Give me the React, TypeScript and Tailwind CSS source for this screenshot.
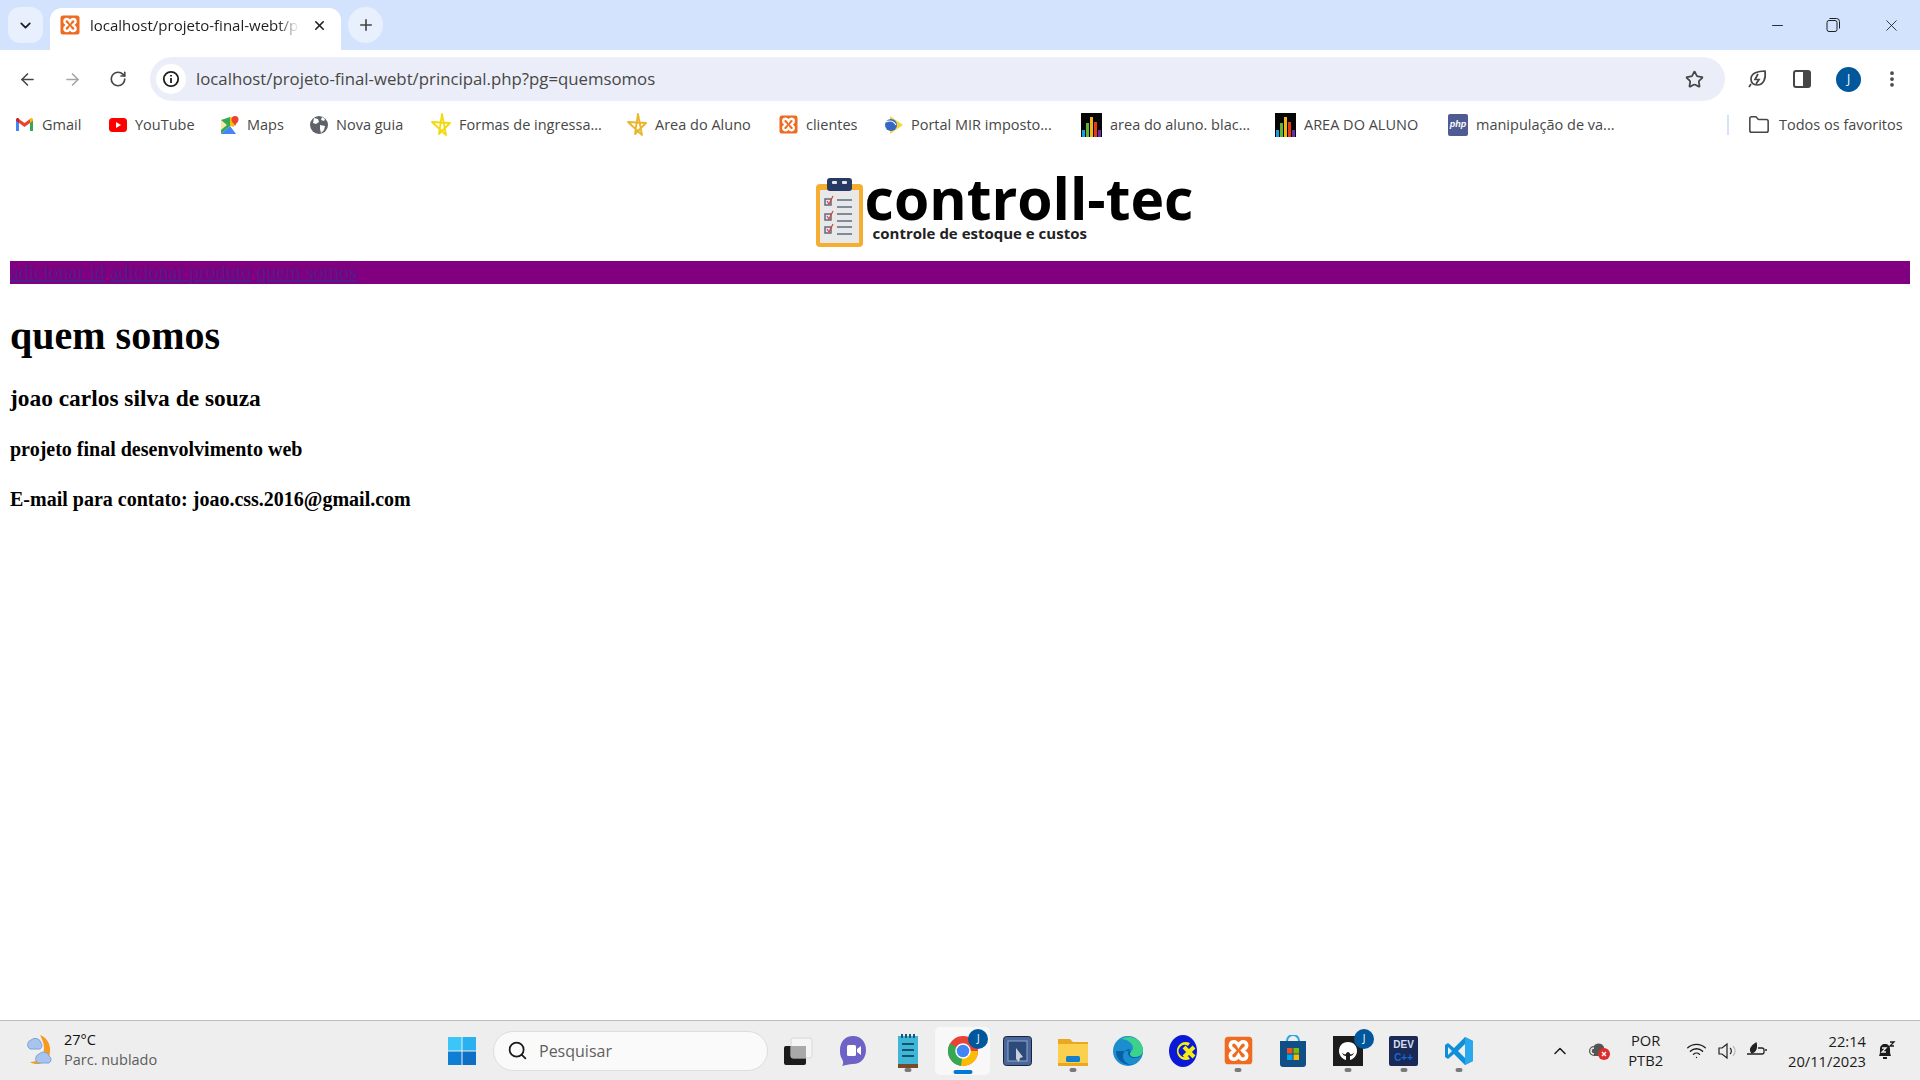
import React from 'react';
import { ArrowLeft, ArrowRight, RotateCw, Star, Plus, X, ChevronDown, ChevronUp, Minus, Folder, Search, EllipsisVertical, Wifi } from 'lucide-react';

const UI_FONT = 'font-["Open_Sans",sans-serif]';

const XamppIcon: React.FC<{ size: number }> = ({ size }) => (
  <svg width={size} height={size} viewBox="0 0 20 20">
    <rect x="0.5" y="0.5" width="19" height="19" rx="2.5" fill="#ee6b1f" />
    <path d="M7 4c-3 0-3.5 3.5-1 5l1 1-1 1c-2.500 1.500-2 5 1 5 1.500 0 2.300-1.300 3-2.500.7 1.200 1.500 2.500 3 2.500 3 0 3.500-3.500 1-5l-1-1 1-1c2.500-1.500 2-5-1-5-1.500 0-2.300 1.300-3 2.500C9.300 5.300 8.500 4 7 4z" fill="none" stroke="#fff" strokeWidth="2.500" />
  </svg>
);

const BarsIcon = () => (
  <svg width="21" height="24" viewBox="0 0 21 24">
    <rect width="21" height="24" fill="#050505" />
    <rect x="1" y="17" width="3" height="7" fill="#1b9be0" />
    <rect x="5" y="10" width="3" height="14" fill="#63b32e" />
    <rect x="9" y="4" width="3" height="20" fill="#f0b41c" />
    <rect x="13" y="9" width="3" height="15" fill="#e53a1a" />
    <rect x="17" y="17" width="3" height="7" fill="#6a2da8" />
  </svg>
);

const StarOutline: React.FC<{ color: string }> = ({ color }) => (
  <svg width="20" height="24" viewBox="0 0 20 24">
    <path d="M11 1 8 21l11-11L1 9l14 13z" fill="none" stroke={color} strokeWidth="1.800" strokeLinejoin="round" />
  </svg>
);

const bookmarks: { label: string; width: string; icon: React.ReactNode }[] = [
  {
    label: 'Gmail',
    width: 'w-[94px]',
    icon: (
      <svg width="19" height="15" viewBox="0 0 19 15">
        <path d="M1 14V3l3 2v9z" fill="#4285f4" />
        <path d="M15 14V5l3-2v11z" fill="#34a853" />
        <path d="M4 6V2L9.500 6 15 2v4L9.500 10z" fill="#ea4335" />
        <path d="M1 3.500V2.500C1 1 3 .4 4 1.500V6z" fill="#c5221f" />
        <path d="M18 3.500V2.500C18 1 16 .4 15 1.500V6z" fill="#fbbc04" />
      </svg>
    ),
  },
  {
    label: 'YouTube',
    width: 'w-[111px]',
    icon: (
      <svg width="18" height="14" viewBox="0 0 18 14">
        <rect width="18" height="14" rx="3.500" fill="#f00" />
        <path d="M7 4l5 3-5 3z" fill="#fff" />
      </svg>
    ),
  },
  {
    label: 'Maps',
    width: 'w-[90px]',
    icon: (
      <svg width="19" height="20" viewBox="0 0 19 20">
        <path d="M1 5l9-3v9L1 19z" fill="#34a853" />
        <path d="M1 19l9-8 6 8z" fill="#4285f4" />
        <path d="M10 2l4 1v9l-4-1z" fill="#fbbc04" />
        <path d="M1 5l6 5-6 5z" fill="#fce8a6" />
        <circle cx="15" cy="4.500" r="3.500" fill="#ea4335" />
        <path d="M12.500 6.500 15 11l2.500-4.500z" fill="#ea4335" />
      </svg>
    ),
  },
  {
    label: 'Nova guia',
    width: 'w-[121px]',
    icon: (
      <svg width="18" height="18" viewBox="0 0 18 18">
        <circle cx="9" cy="9" r="9" fill="#5f6368" />
        <path d="M4 2l4 1 1 3-3 2-3-1zM10 9l5 1-1 4-3 3-1-4zM12 1l3 2-1 2-3-1z" fill="#fff" />
      </svg>
    ),
  },
  { label: 'Formas de ingressa...', width: 'w-[196px]', icon: <StarOutline color="#f5d90f" /> },
  { label: 'Area do Aluno', width: 'w-[152px]', icon: <StarOutline color="#e9b52a" /> },
  { label: 'clientes', width: 'w-[105px]', icon: <XamppIcon size={19} /> },
  {
    label: 'Portal MIR imposto...',
    width: 'w-[197px]',
    icon: (
      <svg width="19" height="20" viewBox="0 0 19 20">
        <path d="M6 1l13 9L6 19z" fill="#f4d63a" />
        <circle cx="7" cy="10" r="6" fill="#3568c4" />
        <path d="M2 7c4-2 8-1 10 3" fill="none" stroke="#fff" strokeWidth="1.200" />
      </svg>
    ),
  },
  { label: 'area do aluno. blac...', width: 'w-[194px]', icon: <BarsIcon /> },
  { label: 'AREA DO ALUNO', width: 'w-[173px]', icon: <BarsIcon /> },
  {
    label: 'manipulação de va...',
    width: 'w-[200px]',
    icon: (
      <span className="flex h-[22px] w-[20px] items-center justify-center rounded-[2px] bg-[#4f5b93] font-['Liberation_Sans',sans-serif] text-[9px] font-bold italic text-white">
        php
      </span>
    ),
  },
];

const TabStrip = () => (
  <div className="flex h-[50px] items-end bg-[#d3e3fd] pl-2">
    <div className="mb-[7px] flex h-[36px] w-[35px] items-center justify-center rounded-[12px] bg-[#e8effd] text-[#1f1f1f]">
      <ChevronDown size={17} strokeWidth={2.500} />
    </div>
    <div className="ml-[7px] flex h-[42px] w-[291px] items-center rounded-t-[12px] bg-white pb-[8px] pl-[10px]">
      <XamppIcon size={20} />
      <span className={`ml-[10px] w-[209px] overflow-hidden whitespace-nowrap text-[15px] text-[#1f1f1f] [mask-image:linear-gradient(to_right,#000_90%,transparent)] ${UI_FONT}`}>
        localhost/projeto-final-webt/principal.php
      </span>
      <X size={15} strokeWidth={2.500} className="ml-[13px] text-[#1f1f1f]" />
    </div>
    <div className="mb-[7px] ml-[7px] flex h-[36px] w-[35px] items-center justify-center rounded-full bg-[#e8effd] text-[#444746]">
      <Plus size={18} strokeWidth={2.200} />
    </div>
    <div className="mb-[9px] ml-auto flex h-[32px] items-center text-[#1f1f1f]">
      <Minus size={17} strokeWidth={1.300} className="mr-[40px]" />
      <svg width="14" height="14" viewBox="0 0 14 14" className="mr-[42px]" fill="none" stroke="currentColor">
        <rect x="1" y="2.500" width="10" height="11" rx="2" />
        <path d="M3.500 .5h7a3 3 0 0 1 3 3v7" />
      </svg>
      <X size={19} strokeWidth={1.100} className="mr-[19px]" />
    </div>
  </div>
);

const Toolbar = () => (
  <div className="flex h-[51px] items-start rounded-t-[10px] bg-white pt-[7px]">
    <div className="flex h-[44px] w-[150px] items-center pl-[18px]">
      <ArrowLeft size={19} strokeWidth={2} className="text-[#444746]" />
      <ArrowRight size={19} strokeWidth={2} className="ml-[26px] text-[#a3a5a8]" />
      <RotateCw size={18} strokeWidth={2.200} className="ml-[27px] text-[#444746]" />
    </div>
    <div className="flex h-[44px] w-[1575px] items-center rounded-full bg-[#ebeef8] pl-[6px] pr-[21px]">
      <div className="flex h-[30px] w-[30px] items-center justify-center rounded-full bg-white">
        <svg width="18" height="18" viewBox="0 0 18 18" fill="none" stroke="#1f1f1f" strokeWidth="1.800">
          <circle cx="9" cy="9" r="7.200" />
          <path d="M9 8v5M9 5v1.500" />
        </svg>
      </div>
      <span className={`ml-[10px] flex-1 whitespace-nowrap text-[16.800px] text-[#474747] ${UI_FONT}`}>
        localhost/projeto-final-webt/principal.php?pg=quemsomos
      </span>
      <Star size={19} strokeWidth={2.200} className="text-[#444746]" />
    </div>
    <div className="flex h-[44px] flex-1 items-center pl-[22px] text-[#444746]">
      <svg width="20" height="20" viewBox="0 0 20 20" fill="none" stroke="currentColor" strokeWidth="1.700">
        <path d="M2 18l2-3M18 2c1 7-1 14-8 14-4 0-6-2-6-6 0-6 7-8 14-8z" />
        <path d="M11 5 8 10.500h4L9 15" />
      </svg>
      <svg width="18" height="18" viewBox="0 0 18 18" className="ml-[26px]">
        <rect x="1" y="1" width="16" height="16" rx="2" fill="none" stroke="currentColor" strokeWidth="2" />
        <rect x="10" y="1" width="7" height="16" fill="currentColor" />
      </svg>
      <div className={`ml-[25px] flex h-[25px] w-[25px] items-center justify-center rounded-full bg-[#01579b] text-[12px] text-white ${UI_FONT}`}>J</div>
      <EllipsisVertical size={20} strokeWidth={2.500} className="ml-[21px]" />
    </div>
  </div>
);

const BookmarksBar = () => (
  <div className={`flex h-[45px] items-center pl-[15px] pt-[2px] text-[14.500px] text-[#474747] ${UI_FONT}`}>
    {bookmarks.map((b) => (
      <div key={b.label} className={`flex shrink-0 items-center gap-[8px] whitespace-nowrap ${b.width}`}>
        {b.icon}
        <span>{b.label}</span>
      </div>
    ))}
    <div className="ml-[79px] h-[20px] w-[2px] bg-[#d3e3fd]" />
    <Folder size={22} strokeWidth={1.700} className="ml-[19px] text-[#444746]" />
    <span className="ml-[9px] whitespace-nowrap">Todos os favoritos</span>
  </div>
);

const Logo = () => (
  <div className="flex h-[115px] items-start justify-center pl-[88px] pt-[29px]">
    <div className="mt-[2px] flex">
      <svg width="50" height="70" viewBox="0 0 50 70">
        <rect x="1" y="7" width="47" height="63" rx="4" fill="#f5ae31" />
        <rect x="5" y="13" width="39" height="53" fill="#e8e8e8" />
        <rect x="12" y="1" width="25" height="13" rx="3" fill="#263a63" />
        <rect x="17" y="4" width="5" height="3" rx="1" fill="#e8e8e8" />
        <rect x="27" y="4" width="5" height="3" rx="1" fill="#e8e8e8" />
        <g fill="none" stroke="#5d6b85" strokeWidth="1.500">
          <rect x="10" y="22" width="6" height="6" />
          <rect x="10" y="37" width="6" height="6" />
          <rect x="10" y="50" width="6" height="6" />
          <path d="M22 23h15M22 30h15M22 37h15M22 44h15M22 50h15M22 57h15" />
        </g>
        <g fill="none" stroke="#e0413a" strokeWidth="1.200">
          <path d="M12 24l2 3 4-8M12 39l2 3 4-8M12 52l2 3 4-8" />
        </g>
      </svg>
    </div>
    <div className="flex flex-col font-['Open_Sans',sans-serif] font-bold text-black">
      <span className="mt-[-2px] h-[50px] whitespace-nowrap text-[57px] leading-[50px]">controll-tec</span>
      <span className="ml-[8px] whitespace-nowrap text-[15px] leading-[20px] text-[#222]">controle de estoque e custos</span>
    </div>
  </div>
);

const App = () => {
  return (
    <div className="flex h-screen flex-col overflow-hidden bg-white">
      <TabStrip />
      <Toolbar />
      <BookmarksBar />
      <main className="flex-1 px-[10px] font-['Liberation_Serif',serif] text-black">
        <Logo />
        <nav className="flex h-[23px] gap-[5px] bg-[#800080] text-[20px] leading-[23px] text-[#551a8b] underline">
          <a href="#">adicionar id</a>
          <a href="#">adicionar produto</a>
          <a href="#">quem somos</a>
        </nav>
        <h1 className="mt-[29px] text-[40px] font-bold leading-[46px]">quem somos</h1>
        <h3 className="mt-[26px] text-[23.400px] font-bold leading-[27px]">joao carlos silva de souza</h3>
        <h4 className="mt-[26px] text-[20px] font-bold leading-[23px]">projeto final desenvolvimento web</h4>
        <h4 className="mt-[27px] text-[20px] font-bold leading-[23px]">E-mail para contato: joao.css.2016@gmail.com</h4>
      </main>
      <Taskbar />
    </div>
  );
};

const Tray = () => (
  <div className={`flex flex-1 items-center justify-end text-[#1a1a1a] ${UI_FONT}`}>
    <ChevronUp size={20} strokeWidth={1.800} className="mr-[18px]" />
    <svg width="24" height="20" viewBox="0 0 24 20" className="mr-[16px]">
      <path d="M6 15a5 5 0 0 1 0-10c1-3 8-4 10 1v9z" fill="#555" />
      <path d="M6 13a3 3 0 0 1 0-6" fill="none" stroke="#eee" strokeWidth="1.500" />
      <circle cx="16" cy="13" r="6" fill="#e02b2b" />
      <path d="M14 11l4 4M18 11l-4 4" stroke="#fff" strokeWidth="1.400" />
    </svg>
    <div className="mb-[2px] mr-[23px] flex flex-col items-center text-[14.700px] leading-[20px]">
      <span>POR</span>
      <span>PTB2</span>
    </div>
    <Wifi size={21} strokeWidth={1.500} className="mr-[10px]" />
    <svg width="22" height="18" viewBox="0 0 22 18" fill="none" stroke="#222" strokeWidth="1.200" className="mr-[7px]">
      <path d="M2 6h3l5-4v14l-5-4H2z" />
      <path d="M13 6a4 4 0 0 1 0 6" />
      <path d="M16 4a7 7 0 0 1 0 10" stroke="#bbb" />
    </svg>
    <svg width="22" height="18" viewBox="0 0 22 18" fill="none" stroke="#222" strokeWidth="1.300" className="mr-[20px]">
      <path d="M1 12h15a2 2 0 0 0 2-2V8a2 2 0 0 0-2-2h-4M19 8h2" />
      <path d="M6 11c-3-3-1-7 4-10 1 4 0 8-4 10z" fill="#222" />
    </svg>
    <div className="mr-[10px] flex flex-col items-end text-[14.700px] leading-[20px]">
      <span>22:14</span>
      <span>20/11/2023</span>
    </div>
    <svg width="20" height="22" viewBox="0 0 20 22" className="mr-[24px]">
      <path d="M3 16c1-2 1-4 1-7 0-3 2-5 5-5s5 2 5 5c0 3 0 5 1 7z" fill="#1a1a1a" />
      <rect x="7" y="17" width="4" height="2" fill="#1a1a1a" />
      <path d="M6 8h4l-4 4h4" fill="none" stroke="#eee" strokeWidth="1.300" />
      <path d="M14 2h4l-4 4h4" fill="none" stroke="#1a1a1a" strokeWidth="1.300" />
    </svg>
  </div>
);

const Dot = () => <div className="absolute bottom-[3px] left-1/2 h-[4px] w-[7px] -translate-x-1/2 rounded-full bg-[#7a7a7a]" />;

const ProfileBadge = () => (
  <div className="absolute right-[2px] top-[2px] flex h-[20px] w-[20px] items-center justify-center rounded-full bg-[#01579b] text-[10px] text-white">J</div>
);

const Slot: React.FC<{ children: React.ReactNode; dot?: boolean; badge?: boolean; active?: boolean }> = ({ children, dot, badge, active }) => (
  <div className={`relative flex h-[48px] w-[55.100px] items-center justify-center rounded-[5px] ${active ? 'bg-[#f8f8f8]' : ''}`}>
    {children}
    {badge && <ProfileBadge />}
    {dot && <Dot />}
    {active && <div className="absolute bottom-[1px] left-1/2 h-[4px] w-[19px] -translate-x-1/2 rounded-full bg-[#0078d4]" />}
  </div>
);

const Taskbar = () => (
  <div className="flex h-[60px] items-center border-t border-[#bdbdbd] bg-[#eeeeee]">
    <div className={`flex w-[447px] items-center pl-[24px] ${UI_FONT}`}>
      <svg width="30" height="38" viewBox="0 0 30 38">
        <path d="M16 3c9 3 12 13 9 22-3 7-13 9-19 5 8 0 14-5 14-14 0-5-2-9-4-13z" fill="#f59a23" />
        <path d="M6 17a5 5 0 0 1 1-9 6 6 0 0 1 10 3 4 4 0 0 1-1 6z" fill="#a8c4ec" stroke="#7da3dc" />
        <path d="M14 31a5 5 0 0 1 1-9 6 6 0 0 1 10 2 4 4 0 0 1 0 7z" fill="#a8c4ec" stroke="#7da3dc" />
      </svg>
      <div className="mb-[2px] ml-[10px] flex flex-col text-[14.500px] leading-[20px]">
        <span className="text-[#111]">27°C</span>
        <span className="text-[#5c5c5c]">Parc. nublado</span>
      </div>
    </div>
    <svg width="30" height="30" viewBox="0 0 30 30" className="shrink-0">
      <rect x="1" y="1" width="13.500" height="13.500" fill="#3cc5f7" />
      <rect x="15.500" y="1" width="13.500" height="13.500" fill="#2ab2f0" />
      <rect x="1" y="15.500" width="13.500" height="13.500" fill="#0f7fd6" />
      <rect x="15.500" y="15.500" width="13.500" height="13.500" fill="#0e6fc5" />
    </svg>
    <div className={`ml-[16px] flex h-[40px] w-[275px] shrink-0 items-center rounded-full border border-[#dddddd] bg-[#fafafa] pl-[13px] text-[16px] text-[#5f5f5f] ${UI_FONT}`}>
      <Search size={21} strokeWidth={2} className="text-[#1a1a1a]" />
      <span className="ml-[11px]">Pesquisar</span>
    </div>
    <div className="ml-[2px] flex shrink-0 items-center font-['Open_Sans',sans-serif]">
      <Slot>
        <svg width="30" height="30" viewBox="0 0 30 30">
          <rect x="1" y="10" width="22" height="19" rx="2" fill="#1c1c1c" />
          <rect x="8" y="2" width="21" height="20" rx="2" fill="#f5f5f5" stroke="#d8d8d8" />
          <rect x="8" y="10" width="15" height="12" fill="#a9a9a9" />
        </svg>
      </Slot>
      <Slot>
        <svg width="28" height="32" viewBox="0 0 28 32">
          <path d="M14 1c8 0 13 6 13 14s-5 14-13 14c-4 0-7 1-11 2 2-3 1-5 0-7-2-3-2-6-2-9C1 7 6 1 14 1z" fill="#6e62c6" />
          <rect x="8" y="10" width="9" height="11" rx="1.500" fill="#fff" />
          <path d="M18 14l4-3v9l-4-3z" fill="#fff" />
        </svg>
      </Slot>
      <Slot dot>
        <svg width="22" height="36" viewBox="0 0 22 36">
          <rect x="1" y="3" width="20" height="30" fill="#3fb6d8" />
          <rect x="1" y="31" width="20" height="4" fill="#7a4a26" />
          <path d="M5 1v4M9 1v4M13 1v4M17 1v4" stroke="#135a78" strokeWidth="2" />
          <path d="M5 11h12M5 17h12M5 23h12" stroke="#12536e" strokeWidth="2" />
        </svg>
      </Slot>
      <Slot active badge>
        <svg width="30" height="30" viewBox="0 0 30 30" className="mt-[1px]">
          <circle cx="15" cy="15" r="15" fill="#ea4335" />
          <path d="M15 30A15 15 0 0 1 2 7.500L15 15z" fill="#34a853" />
          <path d="M15 15h15a15 15 0 0 1-15 15l-2-.1z" fill="#fbbc04" />
          <circle cx="15" cy="15" r="7" fill="#4285f4" stroke="#fff" strokeWidth="1.500" />
        </svg>
      </Slot>
      <Slot>
        <svg width="29" height="30" viewBox="0 0 29 30">
          <rect x="0.500" y="0.500" width="28" height="29" rx="3" fill="#4a679c" stroke="#1a2438" />
          <rect x="5" y="5" width="19" height="20" fill="#2c4a7a" stroke="#8fa6cc" />
          <path d="M13 12l7 9-3 1-1 4-3-3z" fill="#c9d0da" />
        </svg>
      </Slot>
      <Slot dot>
        <svg width="30" height="30" viewBox="0 0 30 30">
          <path d="M0 3h12l3 3h15v24H0z" fill="#e9a820" />
          <rect y="8" width="30" height="22" fill="#fcd04f" />
          <rect x="8" y="20" width="14" height="6" rx="1.500" fill="#1280cc" />
          <rect y="27" width="30" height="3" fill="#e9a820" />
        </svg>
      </Slot>
      <Slot>
        <svg width="30" height="30" viewBox="0 0 30 30">
          <circle cx="15" cy="15" r="15" fill="#1a8ecf" />
          <path d="M30 15c0 4-3 7-8 7-4 0-7-2-7-5s3-4 4-3c-4-2-9 1-9 6 0 6 6 10 12 8-8 3-19-2-19-13" fill="#0a5fa8" />
          <path d="M16 1c8 0 14 6 14 14 0 4-4 6-9 6-3 0-4-2-4-3 0-3 3-3 3-6 0-5-6-9-12-9 2-1 5-2 8-2z" fill="#3cd28a" />
        </svg>
      </Slot>
      <Slot>
        <svg width="30" height="32" viewBox="0 0 30 32">
          <ellipse cx="15" cy="16" rx="14" ry="16" fill="#0a18d8" />
          <path d="M22 8a9 9 0 1 0 0 16l-2-3a6 6 0 1 1 0-10z" fill="#f6ee12" />
          <path d="M16 12l10 10M26 12 16 22" stroke="#f6ee12" strokeWidth="4" />
        </svg>
      </Slot>
      <Slot dot>
        <XamppIcon size={29} />
      </Slot>
      <Slot>
        <svg width="28" height="32" viewBox="0 0 28 32">
          <path d="M8 6a6 6 0 0 1 12 0" fill="none" stroke="#26a6e8" strokeWidth="2" />
          <path d="M1 6h26v23a3 3 0 0 1-3 3H4a3 3 0 0 1-3-3z" fill="#0f4f85" />
          <rect x="8" y="13" width="5.500" height="5.500" fill="#f25022" />
          <rect x="14.500" y="13" width="5.500" height="5.500" fill="#7fba00" />
          <rect x="8" y="19.500" width="5.500" height="5.500" fill="#00a4ef" />
          <rect x="14.500" y="19.500" width="5.500" height="5.500" fill="#ffb900" />
        </svg>
      </Slot>
      <Slot dot badge>
        <svg width="30" height="30" viewBox="0 0 30 30">
          <rect width="30" height="30" fill="#1c1c1c" />
          <path d="M15 6c-6 0-9 4-9 9 0 4 3 8 7 9v-4c-2 0-3-1-4-3 2 1 3 2 4 1 0-1 1-2 2-2s2 1 2 2c1 1 2 0 4-1-1 2-2 3-4 3v4c4-1 7-5 7-9 0-5-3-9-9-9z" fill="#fff" />
        </svg>
      </Slot>
      <Slot dot>
        <div className="flex h-[30px] w-[29px] flex-col items-center rounded-[2px] bg-[#1a2a55] font-['Liberation_Sans',sans-serif] text-[10px] font-bold leading-[13px]">
          <span className="mt-[2px] text-[#d6dff0]">DEV</span>
          <span className="text-[#1268d8]">C++</span>
        </div>
      </Slot>
      <Slot dot>
        <svg width="30" height="30" viewBox="0 0 30 30">
          <path d="M21 1l8 4v20l-8 4-11-11-6 5-3-2v-12l3-2 6 5z" fill="#0f8fd8" />
          <path d="M21 8l-7 7 7 7z" fill="#eeeeee" />
          <path d="M4 11v8l4-4z" fill="#eeeeee" />
          <path d="M21 1l8 4v20l-8 4z" fill="#2aa8ee" />
        </svg>
      </Slot>
    </div>
    <Tray />
  </div>
);

export default App;
